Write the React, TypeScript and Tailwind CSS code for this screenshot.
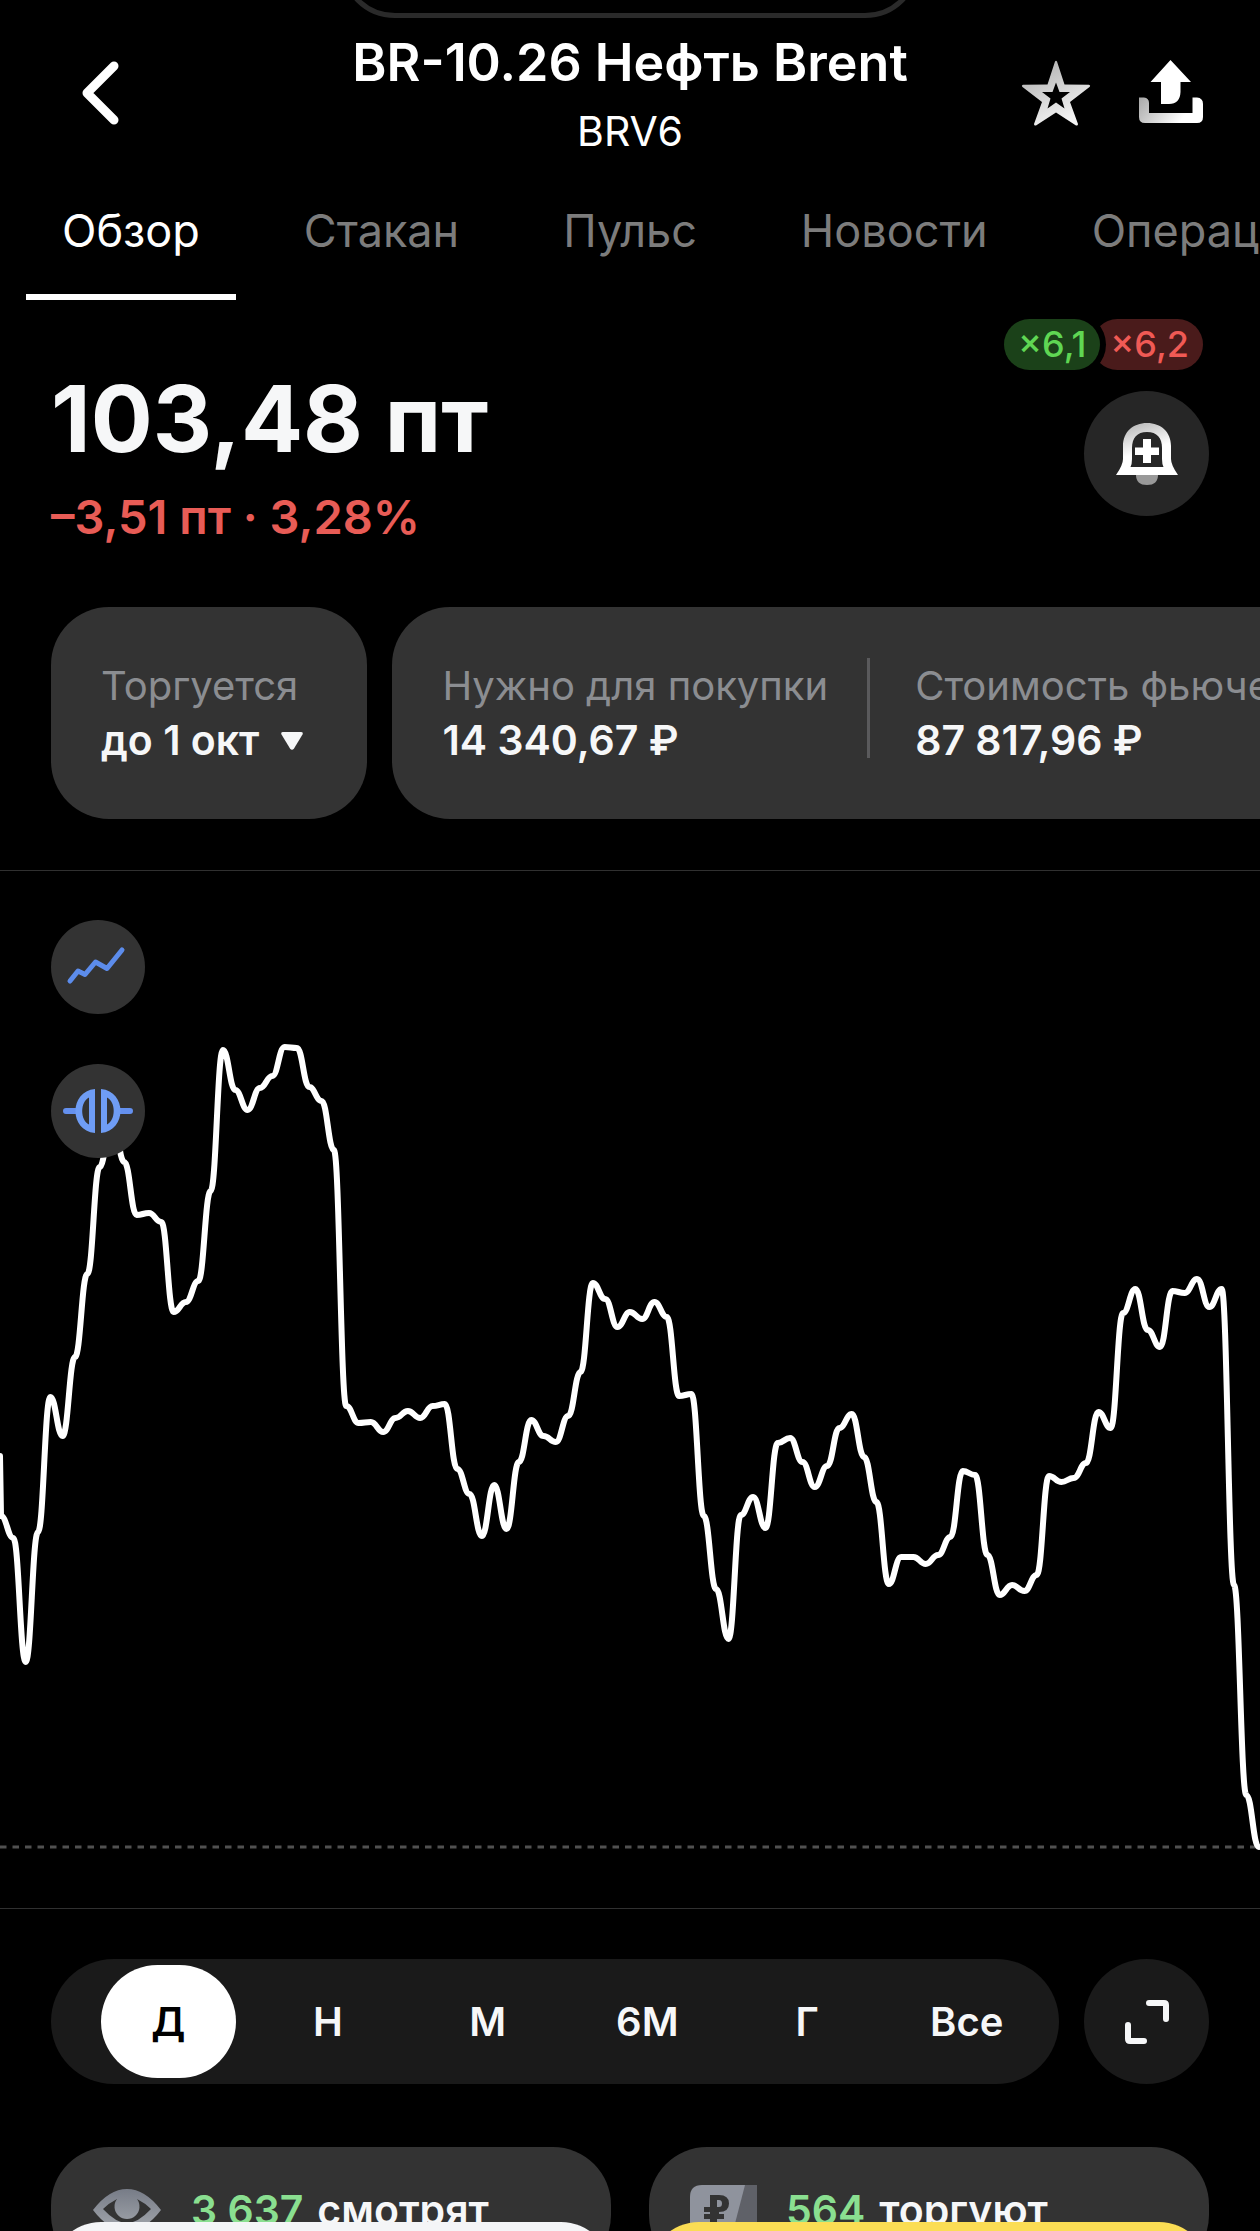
import { useState } from 'react'
import type { ReactNode } from 'react'

type Stat = {
  label: string
  value: string
}

const TABS = ['Обзор', 'Стакан', 'Пульс', 'Новости', 'Операции']

const STATS: Stat[] = [
  { label: 'Нужно для покупки', value: '14 340,67 ₽' },
  { label: 'Стоимость фьючерса', value: '87 817,96 ₽' },
]

const PERIODS = ['Д', 'Н', 'М', '6М', 'Г', 'Все']

// Intraday price series, y in chart pixels (0 is the top of the chart area)
const SERIES = [
  645, 667, 791, 661, 526, 565, 486, 403, 296, 245, 291, 344, 342, 351, 441, 431, 410, 320, 179,
  219, 239, 217, 205, 176, 177, 216, 230, 279, 535, 552, 551, 561, 547, 540, 547, 535, 533, 598,
  623, 665, 614, 658, 591, 549, 565, 571, 545, 501, 412, 428, 456, 441, 448, 431, 446, 525, 523,
  645, 718, 768, 644, 626, 657, 572, 567, 591, 616, 595, 557, 543, 586, 631, 713, 686, 686, 693,
  684, 666, 600, 604, 684, 724, 714, 720, 704, 605, 611, 607, 592, 541, 557, 442, 418, 459, 476,
  420, 422, 408, 436, 418, 714, 924, 976,
]

const CHART_W = 1260
const CHART_H = 1037
const STEP = 12.33
const LAST = SERIES[SERIES.length - 1]

// Every point gets a flat tangent, so the line eases in and out of each value
function buildPath(values: number[]) {
  const handle = STEP * 0.45
  let d = `M0 585 L1 ${values[0]}`
  for (let i = 1; i < values.length; i++) {
    const x0 = 1 + (i - 1) * STEP
    const x1 = 1 + i * STEP
    d += ` C${(x0 + handle).toFixed(1)} ${values[i - 1]} ${(x1 - handle).toFixed(1)} ${values[i]} ${x1.toFixed(1)} ${values[i]}`
  }
  return d
}

export default function App() {
  const [tab, setTab] = useState('Обзор')
  const [period, setPeriod] = useState('Д')

  return (
    <div className="h-screen overflow-hidden bg-black font-['Inter','Liberation_Sans',sans-serif] text-[#f6f7f8]">
      {/* Dynamic island outline */}
      <div className="flex h-[18px] items-end justify-center overflow-hidden">
        <div className="h-[110px] w-[580px] shrink-0 rounded-full border-[5px] border-[#2a2a2a]" />
      </div>

      <header className="grid h-[150px] grid-cols-[1fr_auto_1fr] items-center px-[57px] text-white">
        <button type="button" aria-label="Назад" className="justify-self-start pl-[19px]">
          <ChevronIcon />
        </button>
        <div className="text-center">
          <h1 className="text-[52px] leading-[64px] font-semibold">BR-10.26 Нефть Brent</h1>
          <p className="mt-3 text-[41px] leading-[48px]">BRV6</p>
        </div>
        <div className="flex gap-[48px] justify-self-end">
          <button type="button" aria-label="В избранное">
            <StarIcon />
          </button>
          <button type="button" aria-label="Поделиться">
            <ShareIcon />
          </button>
        </div>
      </header>

      <nav className="flex gap-[32px] overflow-hidden pl-[26px]">
        {TABS.map(name => (
          <button
            key={name}
            type="button"
            onClick={() => setTab(name)}
            className={`shrink-0 border-b-[6px] px-[36px] pt-[35px] pb-[35px] text-[45px] leading-[56px]
              ${tab === name ? 'border-white text-white' : 'border-transparent text-[#7c7c7c]'}`}
          >
            {name}
          </button>
        ))}
      </nav>

      <main>
        <section className="flex justify-between pt-[19px] pr-[51px] pl-[51px]">
          <div className="pt-[54px]">
            <p className="text-[92px] leading-[92px] font-bold">103,48 пт</p>
            <p className="mt-6 text-[47px] leading-[56px] font-semibold text-[#e85c56]">–3,51 пт · 3,28%</p>
          </div>
          <div className="flex flex-col items-end gap-[21px]">
            <div className="flex pr-[6px] text-[36px] leading-[51px] font-medium">
              <span className="z-10 rounded-full bg-[#1b4119] px-[14px] text-[#5fd653] ring-[6px] ring-black">×6,1</span>
              <span className="-ml-2 rounded-full bg-[#4a1b1b] pr-[14px] pl-[18px] text-[#f05a55]">×6,2</span>
            </div>
            <button
              type="button"
              aria-label="Создать уведомление о цене"
              className="flex size-[125px] items-center justify-center rounded-full bg-[#262626]"
            >
              <BellIcon />
            </button>
          </div>
        </section>

        <section className="mt-[62px] flex gap-[25px] overflow-hidden pl-[51px]">
          <button type="button" className="shrink-0 rounded-[58px] bg-[#333] py-[51px] pr-[64px] pl-[50px] text-left">
            <span className="block text-[40px] leading-[55px] text-[#8b8d91]">Торгуется</span>
            <span className="flex items-center gap-[22px] text-[41px] leading-[55px] font-semibold">
              до 1 окт
              <svg width="22" height="18" viewBox="0 0 22 18" fill="currentColor" aria-hidden="true">
                <path d="M2 0H20Q22.500 0 21.500 2.500L13 16.500Q11 19 9 16.500L.5 2.500Q-.5 0 2 0Z" />
              </svg>
            </span>
          </button>
          <dl className="flex shrink-0 rounded-[58px] bg-[#333] px-[50px] py-[51px]">
            {STATS.map((stat, i) => (
              <div key={stat.label} className="flex items-start">
                {i > 0 && <div className="mr-[45px] ml-[39px] h-[100px] w-[3px] bg-[#5a5a5c]" />}
                <div>
                  <dt className="text-[40px] leading-[55px] whitespace-nowrap text-[#8b8d91]">{stat.label}</dt>
                  <dd className="text-[41px] leading-[55px] font-semibold whitespace-nowrap">{stat.value}</dd>
                </div>
              </div>
            ))}
          </dl>
        </section>

        <section className="relative mt-[51px] border-y border-[#303030]">
          <PriceChart />
          <div className="absolute top-[49px] left-[51px] flex flex-col gap-[50px]">
            <ChartButton label="Тип графика">
              <LineIcon />
            </ChartButton>
            <ChartButton label="Индикаторы">
              <GapIcon />
            </ChartButton>
          </div>
        </section>

        <section className="mt-[50px] flex gap-[25px] px-[51px]">
          <div className="flex h-[125px] flex-1 items-center gap-[25px] rounded-full bg-[#1a1a1a] pr-[25px] pl-[50px]">
            {PERIODS.map(name => (
              <button
                key={name}
                type="button"
                onClick={() => setPeriod(name)}
                className={`h-[113px] flex-1 rounded-full text-[40px] leading-[48px] font-semibold
                  ${period === name ? 'bg-white text-black' : ''}`}
              >
                {name}
              </button>
            ))}
          </div>
          <button
            type="button"
            aria-label="На весь экран"
            className="flex size-[125px] items-center justify-center rounded-full bg-[#1a1a1a]"
          >
            <ExpandIcon />
          </button>
        </section>

        <section className="mt-[63px] grid grid-cols-2 gap-[38px] px-[51px]">
          <CounterCard icon={<EyeIcon />} count="3 637" text="смотрят" />
          <CounterCard icon={<RubleCardIcon />} count="564" text="торгуют" />
        </section>
      </main>

      {/* Trade buttons, only their top edge is on screen */}
      <div className="fixed inset-x-0 bottom-0 grid h-[9px] grid-cols-2 gap-[38px] overflow-hidden px-[51px]">
        <button type="button" aria-label="Продать" className="h-[140px] rounded-[50px] bg-[#f4f5f7]" />
        <button type="button" aria-label="Купить" className="h-[140px] rounded-[50px] bg-[#fbdd54]" />
      </div>
    </div>
  )
}

function PriceChart() {
  return (
    <svg
      className="block h-[1037px] w-full"
      viewBox={`0 0 ${CHART_W} ${CHART_H}`}
      preserveAspectRatio="none"
      role="img"
      aria-label="График цены"
    >
      <line x1="0" x2={CHART_W} y1={LAST} y2={LAST} stroke="#505050" strokeWidth="3" strokeDasharray="6.5 6" />
      <path
        d={buildPath(SERIES)}
        fill="none"
        stroke="#fff"
        strokeWidth="6"
        strokeLinejoin="round"
        strokeLinecap="round"
      />
    </svg>
  )
}

function ChartButton({ label, children }: { label: string; children: ReactNode }) {
  return (
    <button
      type="button"
      aria-label={label}
      className="flex size-[94px] items-center justify-center rounded-full bg-[#333]"
    >
      {children}
    </button>
  )
}

function CounterCard({ icon, count, text }: { icon: ReactNode; count: string; text: string }) {
  return (
    <div className="flex items-center gap-[29px] rounded-[58px] bg-[#333] px-[41px] py-[38px]">
      {icon}
      <p className="flex gap-[14px] text-[41px] leading-[50px] font-semibold">
        <span className="text-[#8adf90]">{count}</span>
        <span>{text}</span>
      </p>
    </div>
  )
}

function ChevronIcon() {
  return (
    <svg width="48" height="64" viewBox="0 0 48 64" fill="none" aria-hidden="true">
      <path d="M38 5L11 32L38 59" stroke="#fff" strokeWidth="9" strokeLinecap="round" strokeLinejoin="round" />
    </svg>
  )
}

function StarIcon() {
  return (
    <svg width="70" height="66" viewBox="0 0 70 66" aria-hidden="true">
      <defs>
        <linearGradient id="star" x1="0" y1="0" x2="0.5" y2="1">
          <stop offset="0.2" stopColor="#b8b8b8" />
          <stop offset="1" stopColor="#f4f4f4" />
        </linearGradient>
      </defs>
      <path
        fill="url(#star)"
        fillRule="evenodd"
        d="M34 1.500Q35 0 36 1.500L43.500 24.500L68 24.800Q70 25.500 68.500 27L49 42L57 64Q57 66 55 65.500L35 52.500L15 65.500Q13 66 13 64L21 42L1.500 27Q0 25.500 2 24.800L26.500 24.500ZM35 22.500L31.500 32H21L29.500 38.500L26.500 48.500L35 42.500L43.500 48.500L40.500 38.500L49 32H38.500Z"
      />
    </svg>
  )
}

function ShareIcon() {
  return (
    <svg width="64" height="66" viewBox="0 0 64 66" aria-hidden="true">
      <defs>
        <linearGradient id="tray" x1="0" y1="0" x2="1" y2="0.3">
          <stop offset="0" stopColor="#a8a8a8" />
          <stop offset="0.85" stopColor="#fff" />
        </linearGradient>
      </defs>
      <path fill="#fff" d="M31.500 0L52 22H41.500V32Q41 44 30 44H22V22H11.500Z" />
      <path
        fill="url(#tray)"
        d="M0 37.500H5Q10 38 10 43V53H53.500V37.500H58Q64 38 64 44V57Q64 63 58 63H6Q0 63 0 57Z"
      />
    </svg>
  )
}

function BellIcon() {
  return (
    <svg width="64" height="64" viewBox="0 0 64 64" aria-hidden="true">
      <defs>
        <linearGradient id="bell" x1="0.2" y1="0" x2="0.5" y2="0.8">
          <stop offset="0" stopColor="#b5b5b5" />
          <stop offset="0.7" stopColor="#fff" />
        </linearGradient>
      </defs>
      <path fill="#999" d="M21 53H43Q43 63 32 63Q21 63 21 53Z" />
      <path
        fill="url(#bell)"
        fillRule="evenodd"
        d="M32 1C46 1 56 10 56 24V37Q56 43 63 53H1Q8 43 8 37V24C8 10 18 1 32 1ZM32 10C22 10 17 16 17 26V37Q17 42 15.500 45H48.500Q47 42 47 37V26C47 16 42 10 32 10Z"
      />
      <path fill="#fff" d="M28 17H36V25.500H44V33H36V41H28V33H20V25.500H28Z" />
    </svg>
  )
}

function LineIcon() {
  return (
    <svg width="68" height="42" viewBox="0 0 68 42" fill="none" aria-hidden="true">
      <path
        d="M6 35L14 25L21 28.500L31.500 16L43 22.500L58 4"
        stroke="#5c8ceb"
        strokeWidth="5"
        strokeLinecap="round"
        strokeLinejoin="round"
      />
    </svg>
  )
}

function GapIcon() {
  return (
    <svg width="70" height="46" viewBox="0 0 70 46" aria-hidden="true">
      <path d="M3 23H15M55 23H67" stroke="#6490ee" strokeWidth="6" strokeLinecap="round" />
      <path
        fill="#6f9df5"
        fillRule="evenodd"
        d="M32 1V45C6 43 6 3 32 1ZM26 9.500C17 14 17 32 26 36.500ZM38 1V45C64 43 64 3 38 1ZM44 9.500C53 14 53 32 44 36.500Z"
      />
    </svg>
  )
}

function ExpandIcon() {
  return (
    <svg width="44" height="44" viewBox="0 0 44 44" fill="none" aria-hidden="true">
      <path
        d="M24 3H39Q41 3 41 5V19M3 25V39Q3 41 5 41H19"
        stroke="#f6f7f8"
        strokeWidth="6"
        strokeLinecap="round"
        strokeLinejoin="round"
      />
    </svg>
  )
}

function EyeIcon() {
  return (
    <svg width="70" height="42" viewBox="0 0 70 42" aria-hidden="true">
      <defs>
        <linearGradient id="eye" x1="0" y1="0" x2="0" y2="1">
          <stop offset="0" stopColor="#777c87" />
          <stop offset="1" stopColor="#a3a7ad" />
        </linearGradient>
      </defs>
      <path
        fill="url(#eye)"
        fillRule="evenodd"
        d="M1 21Q17 0 35 0Q53 0 69 21Q53 42 35 42Q17 42 1 21ZM11 20Q24 34 35 34Q46 34 59 20Q53 14 45 10A12.500 12.500 0 1 1 25 10Q17 14 11 20Z"
      />
    </svg>
  )
}

function RubleCardIcon() {
  return (
    <svg width="67" height="50" viewBox="0 0 67 50" aria-hidden="true">
      <path fill="#5f6168" d="M50 0H67V50H40Z" />
      <path fill="#8f939d" d="M12 0H55L42 50H0V12Q0 0 12 0Z" />
      <path
        fill="#333"
        fillRule="evenodd"
        d="M20 10H29Q39 10 39 18.500Q39 27 29 27V29H34V34H27V38H20V34H14V29H20V27H14V22H20ZM27 15V22H29Q32 22 32 18.500Q32 15 29 15Z"
      />
    </svg>
  )
}
